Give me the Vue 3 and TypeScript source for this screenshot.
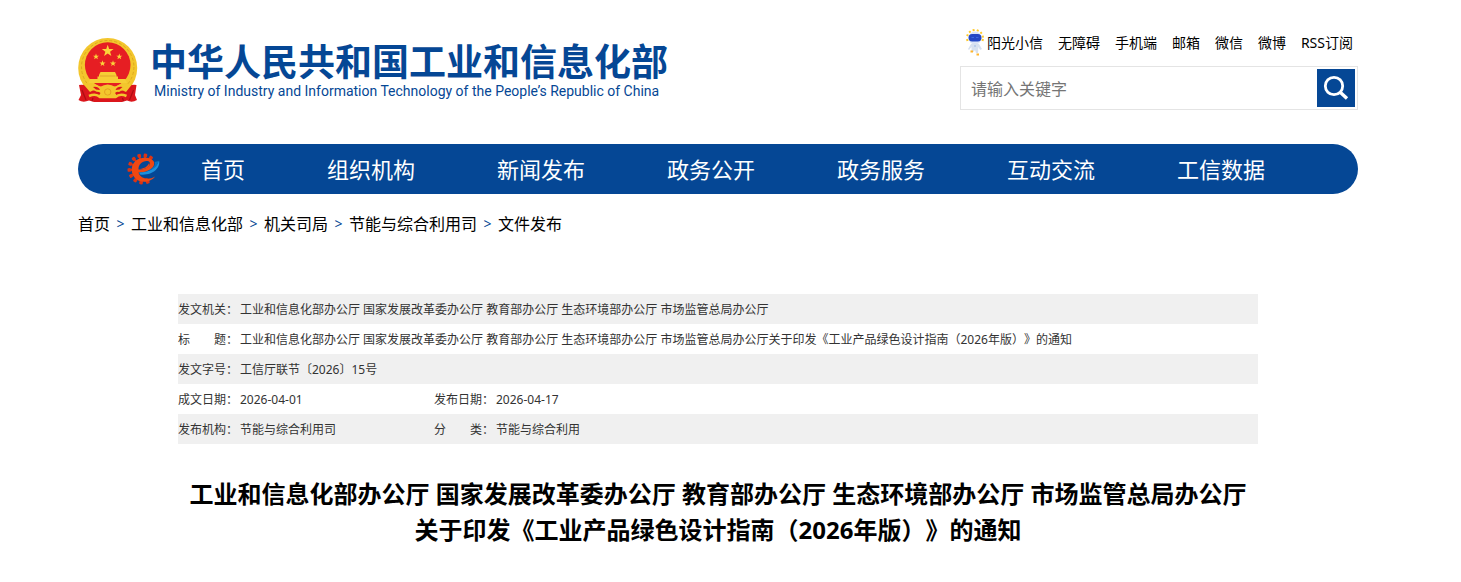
<script setup lang="ts">
import { ref } from 'vue'

interface Field {
  label: string
  value: string
}

const keyword = ref('')

const topLinks: string[] = ['阳光小信', '无障碍', '手机端', '邮箱', '微信', '微博', 'RSS订阅']
const navItems: string[] = ['首页', '组织机构', '新闻发布', '政务公开', '政务服务', '互动交流', '工信数据']
const crumbs: string[] = ['首页', '工业和信息化部', '机关司局', '节能与综合利用司', '文件发布']

const issuers = '工业和信息化部办公厅 国家发展改革委办公厅 教育部办公厅 生态环境部办公厅 市场监管总局办公厅'
const subject = '关于印发《工业产品绿色设计指南（2026年版）》的通知'

const rows: Field[][] = [
  [{ label: '发文机关：', value: issuers }],
  [{ label: '标　　题：', value: issuers + subject }],
  [{ label: '发文字号：', value: '工信厅联节〔2026〕15号' }],
  [
    { label: '成文日期：', value: '2026-04-01' },
    { label: '发布日期：', value: '2026-04-17' },
  ],
  [
    { label: '发布机构：', value: '节能与综合利用司' },
    { label: '分　　类：', value: '节能与综合利用' },
  ],
]

function star(cx: number, cy: number, r: number): string {
  const points: string[] = []
  for (let i = 0; i < 10; i++) {
    const radius = i % 2 === 0 ? r : r * 0.4
    const angle = (Math.PI / 5) * i - Math.PI / 2
    points.push(`${(cx + radius * Math.cos(angle)).toFixed(2)},${(cy + radius * Math.sin(angle)).toFixed(2)}`)
  }
  return points.join(' ')
}

const stars: string[] = [
  star(29.7, 13, 6.2),
  star(18, 18.7, 3.2),
  star(41.3, 18.7, 3.2),
  star(24.5, 25.5, 3.2),
  star(35, 25.5, 3.2),
]
const teeth: number[] = [-55, -80, -106, -132, -158, -184, -210, -236, -262, -290]
const rays: number[] = [-160, -130, -100, -70, -40, -10, 15, 165]
</script>

<template>
  <div class="page" lang="zh-CN">
    <header class="header">
      <a class="brand" href="#">
        <svg class="emblem" viewBox="0 0 60 65" aria-hidden="true">
          <ellipse cx="29.7" cy="30" rx="29.5" ry="30" fill="#f3c62d" />
          <ellipse cx="29.7" cy="29" rx="26.200" ry="26.500" fill="none" stroke="#dda81f" stroke-width="1" stroke-dasharray="3 2" />
          <path d="M1 47 Q8 46 12 50 L19 54 H41 L48 50 Q52 46 58.500 47 L57 57 L59 62 Q54 65 49 62.500 L44 64 H16 L11 62.500 Q5 65 0.500 62 L3 57Z" fill="#db161c" />
          <circle cx="29.7" cy="27" r="22.800" fill="#e61e23" />
          <polygon v-for="points in stars" :key="points" :points="points" fill="#fbd43a" />
          <path d="M22.500 34 H37 L38.500 37 V38.500 H40 V42 H19.500 V38.500 H21 V37Z" fill="#f6ce35" />
          <path d="M22 38 H37.500" stroke="#e0a62a" />
          <path d="M12 41 H47.500 L49 45 H10.500Z" fill="#f6ce35" />
          <path d="M6 47 Q16 44 22 49 Q29.700 44 37.500 49 Q43 44 53.500 47 L48 54 Q42 50 37 55 L40 59 H20 L22.500 55 Q17 50 12 54Z" fill="#f3c62d" />
          <path d="M15 49 Q20 48 22 52 L18 51.500Z M44.500 49 Q39.500 48 37.500 52 L41.500 51.500Z" fill="#db161c" />
          <circle cx="29.7" cy="54" r="5.500" fill="#f3c62d" />
          <circle cx="29.7" cy="54" r="3.200" fill="none" stroke="#e5a021" />
          <path d="M11 58 Q18 55 22 59 H37.500 Q42 55 48.500 58" fill="none" stroke="#f3c62d" stroke-width="2.500" />
          <path d="M4 52 L8 62 M55.500 52 L51.500 62 M15 60 L14 63 M44.500 60 L45.500 63" stroke="#ad0c13" stroke-width="1.200" />
        </svg>
        <span class="names">
          <span class="name-zh">中华人民共和国工业和信息化部</span>
          <span class="name-en" lang="en">Ministry of Industry and Information Technology of the People’s Republic of China</span>
        </span>
      </a>

      <div class="tools">
        <div class="links">
          <svg class="robot" viewBox="0 0 18 28" aria-hidden="true">
            <g v-for="angle in rays" :key="angle" :transform="`rotate(${angle} 9 9)`">
              <path d="M16 9 H18" stroke="#ffc928" stroke-width="2" />
            </g>
            <circle cx="9" cy="9" r="6.500" fill="#dbe5f8" />
            <rect x="2.500" y="5" width="13" height="7.500" rx="3.700" fill="#2447c4" />
            <path d="M5.500 8.500 H8 M10 8.500 H12.500" stroke="#3a68dd" />
            <path d="M5 15 Q9 13 13 15 L16 20 L14 21 L12.500 18 L12 24 H10 L9 21 L7.500 23 L5.500 22 L5.500 18 L3 21 L2 20Z" fill="#d7e1f0" />
            <path d="M4.500 22.500 H7 M10.500 25.500 H13" stroke="#ffb52b" stroke-width="2" />
            <path d="M8 17 H10" stroke="#9db9e6" />
          </svg>
          <a v-for="link in topLinks" :key="link" href="#">{{ link }}</a>
        </div>
        <form class="search" role="search" @submit.prevent>
          <input v-model="keyword" type="text" placeholder="请输入关键字" aria-label="请输入关键字" />
          <button type="submit" aria-label="搜索">
            <svg viewBox="0 0 38 38" aria-hidden="true">
              <circle cx="17" cy="17" r="8.700" fill="none" stroke="#fff" stroke-width="2.800" />
              <path d="M23.200 23.200 L30 29.500" stroke="#fff" stroke-width="3.400" />
            </svg>
          </button>
        </form>
      </div>
    </header>

    <nav class="nav">
      <svg class="gear" viewBox="0 0 34 34" aria-hidden="true">
        <g v-for="angle in teeth" :key="angle" :transform="`rotate(${angle} 16 17)`">
          <rect x="28" y="15.200" width="3.500" height="3.600" rx="1" fill="#dc3414" />
          <rect x="26" y="16" width="3" height="2" fill="#dc3414" />
        </g>
        <path d="M28 24.500 C24 30.500 13 32 7.500 25.500 C2.500 19 4.500 11 10.500 7.500 C16 4.500 25 5 27 10 C28.500 16 21 20.500 11.500 20.500 C13.500 27 22 28.500 28 24.500Z" fill="#f04812" />
        <path d="M11.500 17.500 C11 12 17 7.500 22 9.500 C25.500 12.500 20 18 11.500 17.500Z" fill="#054795" />
        <path d="M13 17 C17 16.500 21 14.500 22 11 C24.500 14 19 18 13 17Z" fill="#f04812" />
        <path d="M32 8.500 C34 16 25 24 13 22.500 L12 20.500 C22 20.500 29 16 32 8.500Z" fill="#1e90dc" />
        <path d="M27.500 10 C29 13 26 16.500 20 19 C27 18 31 13.500 31.500 9Z" fill="#0b70c0" />
      </svg>
      <a v-for="item in navItems" :key="item" href="#">{{ item }}</a>
    </nav>

    <div class="crumbs">
      <template v-for="(crumb, index) in crumbs" :key="crumb">
        <span v-if="index > 0" class="sep">&gt;</span>
        <a href="#">{{ crumb }}</a>
      </template>
    </div>

    <main class="article">
      <table class="info">
        <colgroup>
          <col class="col-label" />
          <col class="col-value" />
          <col class="col-label" />
          <col />
        </colgroup>
        <tbody>
          <tr v-for="row in rows" :key="row[0].label">
            <template v-for="field in row" :key="field.label">
              <th scope="row">{{ field.label }}</th>
              <td :colspan="row.length === 1 ? 3 : 1">{{ field.value }}</td>
            </template>
          </tr>
        </tbody>
      </table>
      <h1>{{ issuers }}<br />{{ subject }}</h1>
    </main>
  </div>
</template>

<style>
body {
  margin: 0;
  background: #fff;
}
</style>

<style scoped>
.page {
  box-sizing: border-box;
  max-width: 1305px;
  margin: 0 auto;
  padding: 29px 25px 32px 0;
  font-family: "Noto Sans", "Noto Sans CJK SC", sans-serif;
  text-spacing-trim: space-all;
  color: #000;
}

a {
  color: inherit;
  text-decoration: none;
}

.header {
  display: flex;
  justify-content: space-between;
  align-items: flex-start;
}

.brand {
  display: flex;
  align-items: flex-start;
  gap: 12px;
  padding-top: 9px;
  color: #054795;
}

.emblem {
  width: 60px;
  height: 65px;
}

.names {
  display: flex;
  flex-direction: column;
  padding-top: 1px;
  white-space: nowrap;
}

.name-zh {
  font-size: 37px;
  font-weight: 700;
  line-height: 46px;
}

.name-en {
  padding-left: 4px;
  font-family: Roboto, "Noto Sans", sans-serif;
  font-size: 14px;
  line-height: 12px;
}

.tools {
  width: 398px;
}

.links {
  display: flex;
  align-items: center;
  justify-content: flex-end;
  gap: 15px;
  padding-right: 5px;
  font-size: 14px;
  line-height: 28px;
  white-space: nowrap;
}

.robot {
  width: 18px;
  height: 28px;
  margin-right: -12px;
}

.search {
  box-sizing: border-box;
  display: flex;
  height: 44px;
  margin-top: 9px;
  padding: 2px;
  border: 1px solid #e4e4e4;
}

.search input {
  flex: 1;
  min-width: 0;
  padding: 2px 8px 0;
  border: 0;
  outline: 0;
  background: none;
  font: inherit;
  font-size: 16px;
}

.search input::placeholder {
  color: #757575;
  opacity: 1;
}

.search button {
  width: 38px;
  height: 38px;
  padding: 0;
  border: 0;
  background: #054795;
}

.search svg {
  display: block;
}

.nav {
  display: flex;
  align-items: center;
  gap: 82px;
  height: 50px;
  margin-top: 34px;
  padding-left: 49px;
  border-radius: 25px;
  background: #054795;
  color: #fff;
  font-size: 22px;
  white-space: nowrap;
}

.nav a {
  padding-bottom: 2px;
}

.gear {
  width: 34px;
  height: 34px;
  margin-right: -42px;
}

.crumbs {
  display: flex;
  align-items: center;
  gap: 6px;
  margin-top: 18px;
  font-size: 16px;
  line-height: 24px;
}

.sep {
  width: 9px;
  color: #054795;
  font-size: 14px;
  text-align: center;
}

.article {
  max-width: 1080px;
  margin: 58px auto 0;
}

.info {
  width: 100%;
  border-collapse: collapse;
  table-layout: fixed;
  color: #333;
  font-size: 12px;
  line-height: 28px;
}

.col-label {
  width: 62px;
}

.col-value {
  width: 194px;
}

.info tr:nth-child(odd) {
  background: #f0f0f0;
}

.info th,
.info td {
  padding: 2px 0 0;
  font-weight: 400;
  text-align: left;
  white-space: nowrap;
}

h1 {
  margin: 32px 0 0;
  font-size: 24px;
  line-height: 36px;
  text-align: center;
}
</style>
